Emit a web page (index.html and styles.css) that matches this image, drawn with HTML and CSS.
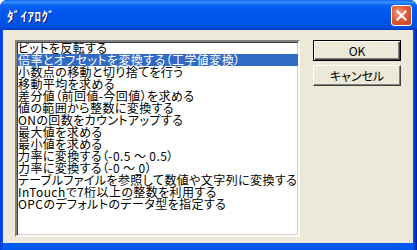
FILE: index.html
```html
<!DOCTYPE html>
<html lang="ja">
<head>
<meta charset="utf-8">
<link rel="stylesheet" href="styles.css">
</head>
<body>
<div class="window">
  <div class="titlebar">
    <span class="title">ﾀﾞｲｱﾛｸﾞ</span>
    <span class="close">
      <svg width="11" height="11" viewBox="0 0 11 11"><path d="M1.5 1.5 L9.5 9.5 M9.5 1.5 L1.5 9.5" stroke="#fff" stroke-width="2.2" stroke-linecap="square"/></svg>
    </span>
  </div>
  <div class="body">
    <ul class="listbox">
      <li>ビットを反転する</li>
      <li class="selected">倍率とオフセットを変換する（工学値変換）</li>
      <li>小数点の移動と切り捨てを行う</li>
      <li>移動平均を求める</li>
      <li>差分値（前回値-今回値）を求める</li>
      <li>値の範囲から整数に変換する</li>
      <li>ONの回数をカウントアップする</li>
      <li>最大値を求める</li>
      <li>最小値を求める</li>
      <li>力率に変換する（-0.5 ～ 0.5）</li>
      <li>力率に変換する（-0 ～ 0）</li>
      <li>テーブルファイルを参照して数値や文字列に変換する</li>
      <li>InTouchで7桁以上の整数を利用する</li>
      <li>OPCのデフォルトのデータ型を指定する</li>
    </ul>
    <div class="buttons">
      <div class="btn default">OK</div>
      <div class="btn">キャンセル</div>
    </div>
  </div>
</div>
</body>
</html>
```
FILE: styles.css
```css
html, body { margin: 0; padding: 0; }
body { width: 417px; height: 250px; overflow: hidden; background: #fff; }
.window {
  width: 417px; height: 250px; box-sizing: border-box;
  display: flex; flex-direction: column;
  background: linear-gradient(to right, #0831d9, #0058ee 3px, #0058ee calc(100% - 4px), #001ea0);
  border-radius: 7px 7px 0 0;
  padding: 0 4px 7px 3px;
  font-family: "Noto Sans CJK JP", "Noto Sans", sans-serif;
}
.titlebar {
  height: 30px; flex: none;
  margin: 0 -4px 0 -3px;
  padding: 0 5px 0 7px;
  display: flex; align-items: center; justify-content: space-between;
  border-radius: 7px 7px 0 0;
  background: linear-gradient(to bottom, #0a5ef5 0, #3d95ff 2px, #0a66f5 5px, #0058ee 10px, #0055eb 20px, #0251e4 26px, #0042cf 29px, #0038bf 30px);
}
.title {
  color: #fff; font-weight: bold; font-size: 13px;
  letter-spacing: 0.5px;
  text-shadow: 1px 1px 0 #0a1883;
  font-family: "Noto Sans CJK JP", sans-serif;
}
.close {
  width: 21px; height: 21px; box-sizing: border-box;
  border: 1px solid #fff; border-radius: 3px;
  background: radial-gradient(circle at 35% 35%, #f09a7a 0, #e35a34 45%, #c7401c 100%);
  display: flex; align-items: center; justify-content: center;
  margin-top: 1px;
}
.body {
  flex: 1; background: #ece9d8;
  display: flex; align-items: flex-start;
  padding: 10px 0 0 12px; gap: 13px;
}
.listbox {
  margin: 0; padding: 0; list-style: none;
  width: 285px; height: 197px; box-sizing: border-box;
  background: #fff;
  border: 2px solid; border-color: #808080 #fff #fff #808080;
  box-shadow: inset 1px 1px 0 #404040, inset -1px -1px 0 #d4d0c8;
  font-size: 12px; line-height: 12px;
  font-feature-settings: "palt";
  letter-spacing: 0.4px;
  color: #000;
}
.listbox li { height: 12px; padding-left: 1px; white-space: nowrap; }
.listbox li.selected { background: #316ac5; color: #fff; }
.buttons { display: flex; flex-direction: column; gap: 4px; }
.btn {
  width: 88px; height: 21px; box-sizing: border-box;
  display: flex; align-items: center; justify-content: center;
  font-size: 12px; font-weight: 400; background: #ece9d8; color: #000;
  border: 1px solid; border-color: #fff #404040 #404040 #fff;
  box-shadow: inset -1px -1px 0 #808080;
  font-feature-settings: "palt";
}
.btn.default {
  border-color: #000;
  box-shadow: inset 1px 1px 0 #fff, inset -1px -1px 0 #404040, inset -2px -2px 0 #808080;
}
```
